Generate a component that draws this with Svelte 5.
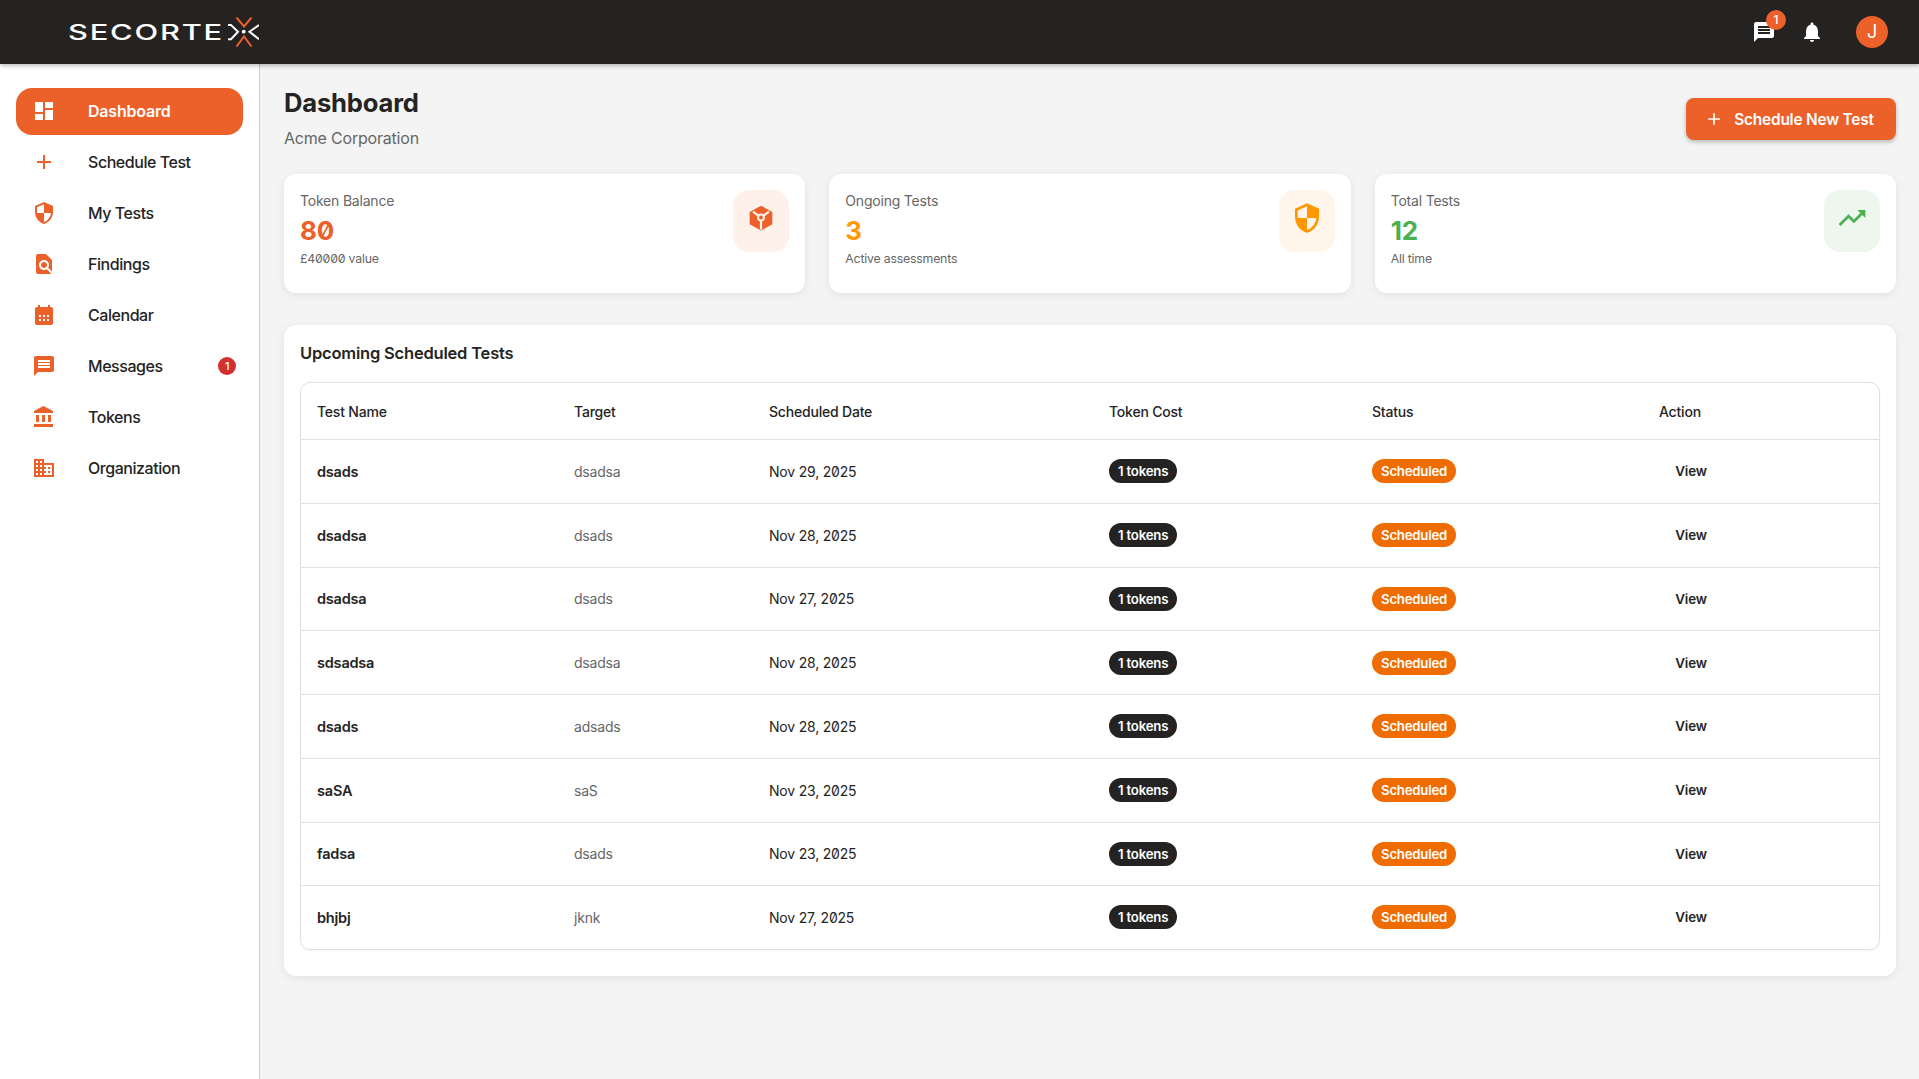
<script>
  const nav = [
    { label: 'Dashboard', d: 'M3 13h8V3H3v10zm0 8h8v-6H3v6zm10 0h8V11h-8v10zm0-18v6h8V3h-8z', active: true },
    { label: 'Schedule Test', d: 'M19 13h-6v6h-2v-6H5v-2h6V5h2v6h6v2z' },
    { label: 'My Tests', d: 'M12 1L3 5v6c0 5.55 3.84 10.74 9 12 5.16-1.26 9-6.45 9-12V5l-9-4zm0 10.99h7c-.53 4.12-3.28 7.79-7 8.94V12H5V6.3l7-3.11v8.8z' },
    { label: 'Findings', d: 'M20 19.59V8l-6-6H6c-1.1 0-1.99.9-1.99 2L4 20c0 1.1.89 2 1.99 2H18c.45 0 .85-.15 1.19-.4l-4.43-4.43c-.8.52-1.74.83-2.76.83-2.76 0-5-2.24-5-5s2.24-5 5-5 5 2.24 5 5c0 1.02-.31 1.96-.83 2.75L20 19.59zM9 13c0 1.66 1.34 3 3 3s3-1.34 3-3-1.34-3-3-3-3 1.34-3 3z' },
    { label: 'Calendar', d: 'M19 4h-1V2h-2v2H8V2H6v2H5c-1.11 0-1.99.9-1.99 2L3 20c0 1.1.89 2 2 2h14c1.1 0 2-.9 2-2V6c0-1.1-.9-2-2-2zM9 14H7v-2h2v2zm4 0h-2v-2h2v2zm4 0h-2v-2h2v2zm-8 4H7v-2h2v2zm4 0h-2v-2h2v2zm4 0h-2v-2h2v2z' },
    { label: 'Messages', d: 'M20 2H4c-1.1 0-1.99.9-1.99 2L2 22l4-4h14c1.1 0 2-.9 2-2V4c0-1.1-.9-2-2-2zm-2 12H6v-2h12v2zm0-3H6V9h12v2zm0-3H6V6h12v2z', badge: 1 },
    { label: 'Tokens', d: 'M4 10v7h3v-7H4zm6 0v7h3v-7h-3zM2 22h19v-3H2v3zm14-12v7h3v-7h-3zm-4.5-9L2 6v2h19V6l-9.5-5z' },
    { label: 'Organization', d: 'M12 7V3H2v18h20V7H12zM6 19H4v-2h2v2zm0-4H4v-2h2v2zm0-4H4V9h2v2zm0-4H4V5h2v2zm4 12H8v-2h2v2zm0-4H8v-2h2v2zm0-4H8V9h2v2zm0-4H8V5h2v2zm10 12h-8v-2h2v-2h-2v-2h2v-2h-2V9h8v10zm-2-8h-2v2h2v-2zm0 4h-2v2h2v-2z' }
  ];

  const stats = [
    { label: 'Token Balance', value: '80', sub: '£40000 value', tone: 'red', kind: 'token' },
    { label: 'Ongoing Tests', value: '3', sub: 'Active assessments', tone: 'amber', kind: 'shield' },
    { label: 'Total Tests', value: '12', sub: 'All time', tone: 'green', kind: 'trend' }
  ];

  const tests = [
    ['dsads', 'dsadsa', 'Nov 29, 2025'],
    ['dsadsa', 'dsads', 'Nov 28, 2025'],
    ['dsadsa', 'dsads', 'Nov 27, 2025'],
    ['sdsadsa', 'dsadsa', 'Nov 28, 2025'],
    ['dsads', 'adsads', 'Nov 28, 2025'],
    ['saSA', 'saS', 'Nov 23, 2025'],
    ['fadsa', 'dsads', 'Nov 23, 2025'],
    ['bhjbj', 'jknk', 'Nov 27, 2025']
  ];

  const shield = 'M12 1L3 5v6c0 5.55 3.84 10.74 9 12 5.16-1.26 9-6.45 9-12V5l-9-4zm0 10.99h7c-.53 4.12-3.28 7.79-7 8.94V12H5V6.3l7-3.11v8.8z';
  const bell = 'M12 22c1.1 0 2-.9 2-2h-4c0 1.1.89 2 2 2zm6-6v-5c0-3.07-1.64-5.64-4.5-6.32V4c0-.83-.67-1.5-1.5-1.5s-1.5.67-1.5 1.5v.68C7.63 5.36 6 7.92 6 11v5l-2 2v1h16v-1l-2-2z';
  const trend = 'M16 6l2.29 2.29-4.88 4.88-4-4L2 16.59 3.41 18l6-6 4 4 6.3-6.29L22 12V6z';
  const chat = 'M20 2H4c-1.1 0-1.99.9-1.99 2L2 22l4-4h14c1.1 0 2-.9 2-2V4c0-1.1-.9-2-2-2zm-2 12H6v-2h12v2zm0-3H6V9h12v2zm0-3H6V6h12v2z';
</script>

<div class="shell">
  <header class="topbar">
    <div class="logo">
      <span class="logo-box"><span class="logo-text">SECORTE</span></span>
      <svg class="logo-x" viewBox="0 0 31 30" width="31" height="30" fill="none" stroke-width="2">
        <path d="M8.5 .5L16 9.5L23.5 .5" stroke="#ec6029" />
        <path d="M8.5 29.5L16 19.5L23.5 29.5" stroke="#ec6029" />
        <path d="M0 8h3L10 14.7L3 22.3H0" stroke="#fff" />
        <path d="M31 8L21.5 14.7L31 22.3" stroke="#fff" />
        <circle cx="15.7" cy="14.7" r="1.9" fill="#fff" stroke="none" />
      </svg>
    </div>
    <div class="top-actions">
      <span class="top-icon">
        <svg viewBox="0 0 24 24" width="24" height="24"><path d={chat} fill="#fff" /></svg>
        <span class="top-badge">1</span>
      </span>
      <span class="top-icon bell">
        <svg viewBox="0 0 24 24" width="24" height="24"><path d={bell} fill="#fff" /></svg>
      </span>
      <span class="avatar">J</span>
    </div>
  </header>

  <div class="body">
    <nav class="sidebar">
      {#each nav as item}
        <a class="nav-item" class:active={item.active} href="#top">
          <svg class="nav-icon" viewBox="0 0 24 24" width="24" height="24"><path d={item.d} fill-rule="evenodd" /></svg>
          <span class="nav-label">{item.label}</span>
          {#if item.badge}<span class="nav-badge">{item.badge}</span>{/if}
        </a>
      {/each}
    </nav>

    <main class="content">
      <div class="page-head">
        <div>
          <h1>Dashboard</h1>
          <p class="org">Acme Corporation</p>
        </div>
        <button class="primary">
          <svg viewBox="0 0 24 24" width="20" height="20"><path d="M19 13h-6v6h-2v-6H5v-2h6V5h2v6h6v2z" fill="#fff" /></svg>
          Schedule New Test
        </button>
      </div>

      <div class="stats">
        {#each stats as s}
          <div class="stat {s.tone}">
            <div class="stat-text">
              <div class="stat-label">{s.label}</div>
              <div class="stat-value">{s.value}</div>
              <div class="stat-sub">{s.sub}</div>
            </div>
            <div class="stat-icon">
              <svg viewBox="0 0 24 24" width="32" height="32">
                {#if s.kind === 'token'}
                  <path d="M12 2.8l8.5 4.7v9.2L12 21.4l-8.5-4.7V7.500z" fill="currentColor" />
                  <path d="M12 11.600L6 7.200M12 11.600L18 7.200M12 11.600v9" stroke="#fdf1e9" stroke-width="1.7" fill="none" />
                  <circle cx="12" cy="11.600" r="2.200" fill="currentColor" stroke="#fdf1e9" stroke-width="1.500" />
                {:else if s.kind === 'shield'}
                  <path d={shield} fill="currentColor" fill-rule="evenodd" />
                {:else}
                  <path d={trend} fill="currentColor" />
                {/if}
              </svg>
            </div>
          </div>
        {/each}
      </div>

      <section class="panel">
        <h2>Upcoming Scheduled Tests</h2>
        <div class="table-box">
          <table>
            <colgroup>
              <col style="width: 257px" />
              <col style="width: 195px" />
              <col style="width: 340px" />
              <col style="width: 263px" />
              <col style="width: 287px" />
              <col />
            </colgroup>
            <thead>
              <tr>
                <th>Test Name</th>
                <th>Target</th>
                <th>Scheduled Date</th>
                <th>Token Cost</th>
                <th>Status</th>
                <th>Action</th>
              </tr>
            </thead>
            <tbody>
              {#each tests as [name, target, date]}
                <tr>
                  <td class="name">{name}</td>
                  <td class="target">{target}</td>
                  <td>{date}</td>
                  <td><span class="pill dark">1 tokens</span></td>
                  <td><span class="pill orange">Scheduled</span></td>
                  <td><button class="view">View</button></td>
                </tr>
              {/each}
            </tbody>
          </table>
        </div>
      </section>
    </main>
  </div>
</div>

<style>
  :global(body) {
    font-family: Inter, "Liberation Sans", sans-serif;
    font-feature-settings: "zero" 1;
    letter-spacing: -0.2px;
    color: #242424;
    background: #f4f4f4;
  }

  .shell {
    display: flex;
    flex-direction: column;
    height: 100vh;
    overflow: hidden;
  }

  .topbar {
    position: relative;
    z-index: 2;
    flex: 0 0 64px;
    display: flex;
    align-items: center;
    justify-content: space-between;
    padding: 0 31px 0 68px;
    background: #242322;
    box-shadow: 0 2px 4px rgba(0, 0, 0, 0.25);
  }

  .logo { display: flex; align-items: center; }
  .logo-box { display: block; width: 160px; padding-top: 2px; }
  .logo-text {
    display: inline-block;
    color: #fff;
    font-size: 21px;
    font-weight: 500;
    letter-spacing: 1.2px;
    line-height: 1;
    transform: scaleX(1.47);
    transform-origin: left center;
  }

  .top-actions { display: flex; align-items: center; }
  .top-icon {
    position: relative;
    display: flex;
    width: 24px;
    height: 24px;
    margin-right: 24px;
  }
  .top-icon.bell { margin-right: 32px; }
  .top-badge {
    position: absolute;
    top: -10px;
    left: 14px;
    width: 20px;
    height: 20px;
    border-radius: 50%;
    background: #ec6029;
    color: #fff;
    font-size: 12px;
    font-weight: 500;
    line-height: 20px;
    text-align: center;
  }
  .avatar {
    width: 32px;
    height: 32px;
    border-radius: 50%;
    background: #ec6029;
    color: #fff;
    font-size: 18px;
    line-height: 32px;
    text-align: center;
  }

  .body { flex: 1; display: flex; min-height: 0; }

  .sidebar {
    flex: 0 0 260px;
    box-sizing: border-box;
    display: flex;
    flex-direction: column;
    gap: 4px;
    padding: 24px 16px;
    background: #fff;
    border-right: 1px solid #cfcdca;
  }
  .nav-item {
    display: flex;
    align-items: center;
    box-sizing: border-box;
    height: 47px;
    padding: 0 7px 2px 16px;
    border-radius: 16px;
    color: #242424;
    font-size: 16px;
    font-weight: 500;
    letter-spacing: -0.45px;
    text-decoration: none;
  }
  .nav-item.active {
    background: #ec6029;
    color: #fff;
    font-weight: 600;
    letter-spacing: -0.2px;
  }
  .nav-icon { flex: 0 0 24px; margin-right: 32px; fill: #ec6029; }
  .active .nav-icon { fill: #fff; }
  .nav-label { flex: 1; }
  .nav-badge {
    width: 18px;
    height: 18px;
    border-radius: 50%;
    background: #d32f2f;
    color: #fff;
    font-size: 11px;
    line-height: 18px;
    text-align: center;
  }

  .content {
    flex: 1;
    min-width: 0;
    padding: 24px 23px 24px 24px;
  }

  .page-head {
    display: flex;
    align-items: center;
    justify-content: space-between;
    margin-bottom: 24px;
  }
  h1 {
    margin: -2px 0 6px;
    font-size: 25.6px;
    line-height: 34px;
    font-weight: 700;
  }
  .org { margin: 0; font-size: 16px; line-height: 24px; color: #666; }

  .primary {
    display: flex;
    align-items: center;
    justify-content: center;
    gap: 10px;
    width: 210px;
    height: 42px;
    padding: 0 4px 0 0;
    border: 0;
    border-radius: 8px;
    background: #ec6029;
    color: #fff;
    font: inherit;
    font-size: 15.4px;
    font-weight: 600;
    letter-spacing: inherit;
    box-shadow: 0 2px 4px rgba(0, 0, 0, 0.25);
  }

  .stats {
    display: grid;
    grid-template-columns: repeat(3, 1fr);
    gap: 24px;
    margin-bottom: 32px;
  }
  .stat {
    display: flex;
    justify-content: space-between;
    height: 119px;
    box-sizing: border-box;
    padding: 16px;
    background: #fff;
    border-radius: 12px;
    box-shadow: 0 2px 8px rgba(0, 0, 0, 0.08);
  }
  .stat-label { font-size: 14px; line-height: 22px; color: #666; }
  .stat-value { font-size: 26px; line-height: 37px; font-weight: 700; }
  .stat-sub { margin-top: 1px; font-size: 12.3px; line-height: 18px; color: #666; }
  .stat-icon {
    display: flex;
    align-items: center;
    justify-content: center;
    box-sizing: border-box;
    width: 56px;
    height: 62px;
    padding-bottom: 6px;
    border-radius: 16px;
  }
  .red .stat-value, .red .stat-icon { color: #ec6029; }
  .red .stat-icon { background: #fdf1e9; }
  .amber .stat-value, .amber .stat-icon { color: #ff9800; }
  .amber .stat-icon { background: #fff5eb; }
  .green .stat-value, .green .stat-icon { color: #4caf50; }
  .green .stat-icon { background: #edf7ee; }

  .panel {
    padding: 16px 16px 26px;
    background: #fff;
    border-radius: 12px;
    box-shadow: 0 2px 8px rgba(0, 0, 0, 0.08);
  }
  h2 {
    margin: 0 0 16px;
    font-size: 16.5px;
    line-height: 25px;
    font-weight: 600;
  }
  .table-box {
    border: 1px solid #e0e0e0;
    border-radius: 10px;
    overflow: hidden;
    box-shadow: 0 1px 2px rgba(0, 0, 0, 0.05);
  }
  table {
    width: 100%;
    table-layout: fixed;
    border-collapse: collapse;
    font-size: 14px;
  }
  th {
    height: 56px;
    padding: 0 16px;
    text-align: left;
    font-weight: 500;
    border-bottom: 1px solid #e0e0e0;
  }
  td {
    height: 63.75px;
    padding: 0 16px;
    box-sizing: border-box;
    border-bottom: 1px solid #e0e0e0;
  }
  tbody tr:last-child td { height: 62.75px; border-bottom: 0; }
  .name { font-weight: 600; font-size: 14.5px; }
  .target { color: #666; }

  .pill {
    display: inline-block;
    height: 24px;
    padding: 0 9px;
    border-radius: 12px;
    color: #fff;
    font-size: 13.2px;
    font-weight: 600;
    line-height: 24px;
  }
  .dark { background: #242322; }
  .orange { background: #ef6c00; }

  .view {
    min-width: 64px;
    height: 30px;
    padding: 0 8px;
    border: 0;
    background: none;
    color: #242424;
    font: inherit;
    font-size: 13.4px;
    font-weight: 600;
    letter-spacing: inherit;
  }
</style>
